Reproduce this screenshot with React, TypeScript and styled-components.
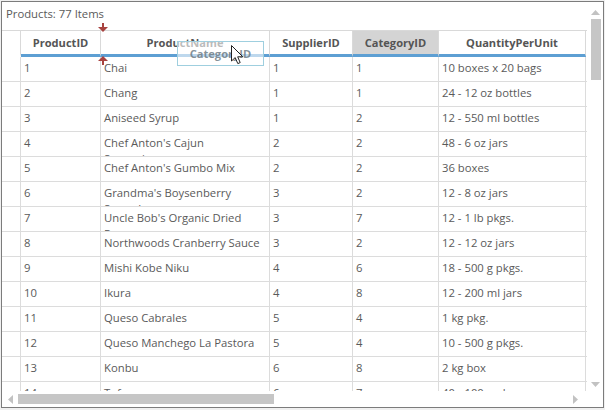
import styled, { createGlobalStyle } from 'styled-components'

const GlobalStyle = createGlobalStyle`
  html, body {
    margin: 0;
    padding: 0;
    background: #f0f0f0;
  }
  body {
    font-family: "Segoe UI", "Open Sans", "Noto Sans", sans-serif;
    font-size: 11.3px;
  }
`

const Frame = styled.div`
  box-sizing: border-box;
  margin: 1px;
  width: 603px;
  height: 407px;
  border: 1px solid #7c7c7c;
  background: #fff;
  display: grid;
  grid-template-columns: 585px 1fr;
  grid-template-rows: 389px 1fr;
  overflow: hidden;
`

const Content = styled.div`
  position: relative;
  display: flex;
  flex-direction: column;
  overflow: hidden;
`

const Title = styled.div`
  height: 28px;
  line-height: 24px;
  padding-left: 4px;
  color: #5a5a5a;
  flex: none;
`

const HeaderRow = styled.div`
  display: flex;
  border-top: 1px solid #d9d9d9;
  flex: none;
`

const HeaderCell = styled.div<{ $w: number; $active?: boolean; $blank?: boolean }>`
  box-sizing: border-box;
  width: ${p => p.$w}px;
  height: 26px;
  flex: none;
  border-right: 1px solid #d9d9d9;
  border-bottom: 3px solid ${p => (p.$blank ? '#fff' : '#5d9fd3')};
  background: ${p => (p.$active ? '#d4d4d4' : '#fff')};
  color: #555;
  font-weight: 700;
  font-size: 11.1px;
  text-align: center;
  line-height: 23px;
  white-space: nowrap;
  overflow: hidden;
`

const Row = styled.div`
  display: flex;
  flex: none;
  border-bottom: 1px solid #dcdcdc;
`

const Cell = styled.div<{ $w: number }>`
  box-sizing: border-box;
  width: ${p => p.$w}px;
  height: 24px;
  flex: none;
  padding: 3px 9px 0 3px;
  border-right: 1px solid #dcdcdc;
  color: #5a5a5a;
  line-height: 16px;
  overflow: hidden;
`

const Ghost = styled.div`
  position: absolute;
  left: 175px;
  top: 39px;
  box-sizing: border-box;
  width: 87px;
  height: 25px;
  border: 1px solid #9fcfdf;
  background: rgba(255, 255, 255, 0.6);
  color: rgba(110, 125, 135, 0.85);
  font-weight: 700;
  font-size: 11.1px;
  text-align: center;
  line-height: 23px;
`

const Marker = styled.svg<{ $top: number }>`
  position: absolute;
  left: 96px;
  top: ${p => p.$top}px;
`

const Cursor = styled.svg`
  position: absolute;
  left: 229px;
  top: 43px;
`

const VScroll = styled.div`
  display: flex;
  flex-direction: column;
  align-items: center;
  padding-top: 8px;
`

const VThumb = styled.div`
  width: 10px;
  height: 61px;
  margin-top: 4px;
  margin-left: 1px;
  background: #c6c6c6;
`

const VDown = styled.div`
  margin-top: auto;
  margin-bottom: 4px;
`

const HScroll = styled.div`
  display: flex;
  align-items: center;
  padding: 0 6px;
  gap: 5px;
`

const HThumb = styled.div`
  width: 256px;
  height: 10px;
  background: #c6c6c6;
`

const HRight = styled.div`
  margin-left: auto;
  margin-right: 3px;
`

const Arrow = ({ dir }: { dir: 'up' | 'down' | 'left' | 'right' }) => {
  const pts = {
    up: '0,5 4.5,0 9,5',
    down: '0,0 4.5,5 9,0',
    left: '5,0 0,4.5 5,9',
    right: '0,0 5,4.5 0,9',
  }[dir]
  const vertical = dir === 'up' || dir === 'down'
  return (
    <svg width={vertical ? 9 : 5} height={vertical ? 5 : 9} style={{ display: 'block' }}>
      <polygon points={pts} fill="#c2c2c2" />
    </svg>
  )
}

const columns = [
  { key: 'id', title: 'ProductID', w: 80 },
  { key: 'name', title: 'ProductName', w: 169 },
  { key: 'supplier', title: 'SupplierID', w: 83 },
  { key: 'category', title: 'CategoryID', w: 86 },
  { key: 'qty', title: 'QuantityPerUnit', w: 147 },
]

const products = [
  ['1', 'Chai', '1', '1', '10 boxes x 20 bags'],
  ['2', 'Chang', '1', '1', '24 - 12 oz bottles'],
  ['3', 'Aniseed Syrup', '1', '2', '12 - 550 ml bottles'],
  ['4', "Chef Anton's Cajun Seasoning", '2', '2', '48 - 6 oz jars'],
  ['5', "Chef Anton's Gumbo Mix", '2', '2', '36 boxes'],
  ['6', "Grandma's Boysenberry Spread", '3', '2', '12 - 8 oz jars'],
  ['7', "Uncle Bob's Organic Dried Pears", '3', '7', '12 - 1 lb pkgs.'],
  ['8', 'Northwoods Cranberry Sauce', '3', '2', '12 - 12 oz jars'],
  ['9', 'Mishi Kobe Niku', '4', '6', '18 - 500 g pkgs.'],
  ['10', 'Ikura', '4', '8', '12 - 200 ml jars'],
  ['11', 'Queso Cabrales', '5', '4', '1 kg pkg.'],
  ['12', 'Queso Manchego La Pastora', '5', '4', '10 - 500 g pkgs.'],
  ['13', 'Konbu', '6', '8', '2 kg box'],
  ['14', 'Tofu', '6', '7', '40 - 100 g pkgs.'],
]

export default function App() {
  return (
    <>
      <GlobalStyle />
      <Frame>
        <Content>
          <Title>Products: 77 Items</Title>
          <HeaderRow>
            <HeaderCell $w={19} $blank />
            {columns.map(c => (
              <HeaderCell key={c.key} $w={c.w} $active={c.key === 'category'}>
                {c.title}
              </HeaderCell>
            ))}
          </HeaderRow>
          {products.map(p => (
            <Row key={p[0]}>
              <Cell $w={19} />
              {p.map((v, i) => (
                <Cell key={i} $w={columns[i].w}>
                  {v}
                </Cell>
              ))}
            </Row>
          ))}

          <Marker $top={21} width="10" height="9" viewBox="0 0 10 9">
            <rect x="4" y="0" width="2" height="4" fill="#a84340" />
            <polygon points="0,4 10,4 5,9" fill="#a84340" />
          </Marker>
          <Marker $top={54} width="10" height="9" viewBox="0 0 10 9">
            <polygon points="0,5 10,5 5,0" fill="#a84340" />
            <rect x="4" y="5" width="2" height="4" fill="#a84340" />
          </Marker>

          <Ghost>CategoryID</Ghost>

          <Cursor width="13" height="20" viewBox="0 0 13 20">
            <path
              d="M0.5 0.5 L0.5 16 L4.2 12.6 L6.8 18.6 L9.2 17.6 L6.7 11.8 L11.8 11.8 Z"
              fill="#fff"
              stroke="#222"
              strokeWidth="1"
              strokeLinejoin="round"
            />
          </Cursor>
        </Content>

        <VScroll>
          <Arrow dir="up" />
          <VThumb />
          <VDown>
            <Arrow dir="down" />
          </VDown>
        </VScroll>

        <HScroll>
          <Arrow dir="left" />
          <HThumb />
          <HRight>
            <Arrow dir="right" />
          </HRight>
        </HScroll>
      </Frame>
    </>
  )
}
